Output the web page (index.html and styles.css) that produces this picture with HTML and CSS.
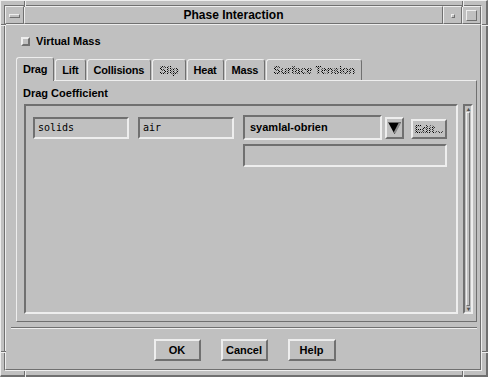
FILE: index.html
```html
<!DOCTYPE html>
<html lang="en">

<head>
    <meta charset="utf-8">
    <title>Phase Interaction</title>
    <link rel="stylesheet" href="styles.css">
</head>

<body>

    <div class="window">
        <div class="frame">
            <div class="titlebar">
                <div class="wm-btn"><span class="menu-bar"></span></div>
                <div class="title">Phase Interaction</div>
                <div class="wm-btn"><span class="min-box"></span></div>
                <div class="wm-btn"><span class="max-box"></span></div>
            </div>

            <div class="client">
                <label class="check"><span class="checkbox"></span>Virtual Mass</label>

                <nav class="tabs">
                    <div class="tab active">Drag</div>
                    <div class="tab">Lift</div>
                    <div class="tab">Collisions</div>
                    <div class="tab"><span class="stipple">Slip</span></div>
                    <div class="tab">Heat</div>
                    <div class="tab">Mass</div>
                    <div class="tab"><span class="stipple">Surface Tension</span></div>
                </nav>

                <section class="panel">
                    <div class="group-label">Drag Coefficient</div>
                    <div class="panel-body">
                        <div class="table">
                            <div class="field mono">solids</div>
                            <div class="field mono">air</div>
                            <div class="method">
                                <div class="method-row">
                                    <div class="combo">syamlal-obrien</div>
                                    <button class="arrow-btn">
                                        <svg width="13" height="12" viewBox="0 0 13 12">
                                            <polygon points="0,0 13,0 6.5,12" fill="#000"/>
                                            <line x1="12" y1="0.5" x2="6.5" y2="11" stroke="#8c8c8c" stroke-width="2"/>
                                            <line x1="0" y1="0.5" x2="13" y2="0.5" stroke="#6a6a6a" stroke-width="1"/>
                                        </svg>
                                    </button>
                                    <button class="edit-btn"><span class="stipple">Edit...</span></button>
                                </div>
                                <div class="field wide"></div>
                            </div>
                        </div>
                        <div class="scrollbar">
                            <span class="sb-arrow">&#9652;</span>
                            <span class="thumb"></span>
                            <span class="sb-arrow">&#9662;</span>
                        </div>
                    </div>
                </section>

                <div class="separator"></div>

                <div class="buttons">
                    <button class="btn">OK</button>
                    <button class="btn">Cancel</button>
                    <button class="btn">Help</button>
                </div>
            </div>
        </div>

        <span class="tick v tl"></span>
        <span class="tick h tl"></span>
        <span class="tick v tr"></span>
        <span class="tick h tr"></span>
        <span class="tick h bl"></span>
        <span class="tick v bl"></span>
        <span class="tick v br"></span>
        <span class="tick h br"></span>
    </div>

</body>

</html>
```

FILE: styles.css
```css
body {
    margin: 0;
    padding: 0;
    background-color: #c0c0c0;
    font-family: "Liberation Sans", Arial, sans-serif;
    font-size: 11px;
    font-weight: bold;
    color: #000;
}

button {
    font-family: inherit;
    font-size: inherit;
    font-weight: inherit;
    color: inherit;
    background-color: #c0c0c0;
    padding: 0;
    margin: 0;
    box-sizing: border-box;
}

/* window manager frame */
.window {
    position: relative;
    width: 488px;
    height: 377px;
    box-sizing: border-box;
    border-style: solid;
    border-width: 1px 2px 2px 1px;
    border-color: #eeeeee #707070 #707070 #eeeeee;
    padding: 4px 4px 4px 3px;
}

.frame {
    height: 100%;
    box-sizing: border-box;
    border: 1px solid;
    border-color: #707070 #eeeeee #eeeeee #707070;
    display: flex;
    flex-direction: column;
}

.titlebar {
    display: flex;
    height: 18px;
}

.wm-btn,
.title {
    box-sizing: border-box;
    border: 1px solid;
    border-color: #eeeeee #707070 #707070 #eeeeee;
    display: flex;
    align-items: center;
    justify-content: center;
}

.wm-btn {
    width: 19px;
}

.title {
    flex: 1;
    font-size: 12px;
    line-height: 15px;
    padding-top: 1px;
}

.menu-bar {
    width: 11px;
    height: 4px;
    box-sizing: border-box;
    border: 1px solid;
    border-color: #eeeeee #707070 #707070 #eeeeee;
    margin-top: 1px;
}

.min-box {
    width: 4px;
    height: 4px;
    box-sizing: border-box;
    border: 1px solid;
    border-color: #eeeeee #707070 #707070 #eeeeee;
    margin-top: 1px;
}

.max-box {
    width: 11px;
    height: 11px;
    box-sizing: border-box;
    border: 1px solid;
    border-color: #eeeeee #707070 #707070 #eeeeee;
}

.tick {
    position: absolute;
    background-color: #eeeeee;
}

.tick.v {
    width: 1px;
    height: 6px;
    border-left: 1px solid #707070;
}

.tick.h {
    width: 5px;
    height: 1px;
    border-top: 1px solid #707070;
}

.tick.v.tl { left: 23px; top: 0; }
.tick.v.tr { left: 461px; top: 0; }
.tick.v.bl { left: 23px; top: 370px; height: 7px; }
.tick.v.br { left: 461px; top: 370px; height: 7px; }
.tick.h.tl { left: 0; top: 23px; width: 5px; }
.tick.h.bl { left: 0; top: 350px; width: 5px; }
.tick.h.tr { left: 481px; top: 23px; width: 7px; }
.tick.h.br { left: 481px; top: 350px; width: 7px; }

/* dialog */
.client {
    flex: 1;
    box-sizing: border-box;
    border: 1px solid;
    border-color: #eeeeee #707070 #707070 #eeeeee;
    display: flex;
    flex-direction: column;
}

.check {
    display: flex;
    align-items: center;
    gap: 6px;
    height: 9px;
    line-height: 9px;
    margin: 12px 0 0 15px;
}

.checkbox {
    width: 9px;
    height: 9px;
    box-sizing: border-box;
    border: 2px solid;
    border-color: #eeeeee #707070 #707070 #eeeeee;
}

.tabs {
    display: flex;
    align-items: flex-end;
    gap: 1px;
    height: 23px;
    margin: 11px 0 0 10px;
    position: relative;
    z-index: 1;
}

.tab {
    height: 21px;
    box-sizing: border-box;
    border: 1px solid;
    border-bottom: none;
    border-color: #eeeeee #707070 transparent #eeeeee;
    border-radius: 3px 3px 0 0;
    padding: 0 6px;
    line-height: 20px;
    letter-spacing: -0.2px;
    background-color: #c0c0c0;
}

.tab.active {
    height: 24px;
    margin-bottom: -1px;
    padding-top: 2px;
    line-height: 18px;
}

.stipple {
    color: transparent;
    background-image: repeating-conic-gradient(#000 0 25%, transparent 0 50%);
    background-size: 2px 2px;
    -webkit-background-clip: text;
    background-clip: text;
}

.panel {
    height: 242px;
    margin: 0 3px 0 10px;
    box-sizing: border-box;
    border: 1px solid;
    border-color: #eeeeee #707070 #707070 #eeeeee;
    padding: 0 3px 7px 7px;
    display: flex;
    flex-direction: column;
}

.group-label {
    height: 23px;
    box-sizing: border-box;
    padding-top: 6px;
    line-height: 13px;
    margin-left: -1px;
}

.panel-body {
    flex: 1;
    display: flex;
    gap: 5px;
}

.table {
    flex: 1;
    box-sizing: border-box;
    border: 2px solid;
    border-color: #707070 #eeeeee #eeeeee #707070;
    padding: 9px 0 0 7px;
    display: flex;
    align-items: flex-start;
    gap: 9px;
}

.field {
    width: 96px;
    height: 22px;
    box-sizing: border-box;
    border: 2px solid;
    border-color: #707070 #eeeeee #eeeeee #707070;
    padding-left: 3px;
    line-height: 18px;
    margin-top: 2px;
}

.mono {
    font-family: "DejaVu Sans Mono", "Liberation Mono", monospace;
    font-weight: normal;
    font-size: 10px;
}

.field.wide {
    width: 204px;
    height: 23px;
    margin-top: 0;
}

.method {
    display: flex;
    flex-direction: column;
    gap: 4px;
}

.method-row {
    display: flex;
    align-items: center;
    height: 25px;
}

.combo {
    width: 139px;
    height: 25px;
    box-sizing: border-box;
    border: 2px solid;
    border-color: #707070 #eeeeee #eeeeee #707070;
    padding-left: 5px;
    line-height: 21px;
}

.arrow-btn {
    width: 19px;
    height: 22px;
    margin-left: 3px;
    border: 2px solid;
    border-color: #eeeeee #707070 #707070 #eeeeee;
    display: flex;
    align-items: center;
    justify-content: center;
}

.edit-btn {
    width: 36px;
    height: 20px;
    margin: 3px 0 0 7px;
    border: 2px solid;
    border-color: #eeeeee #707070 #707070 #eeeeee;
    line-height: 16px;
    letter-spacing: -0.2px;
}

.scrollbar {
    width: 10px;
    box-sizing: border-box;
    border: 2px solid;
    border-color: #707070 #eeeeee #eeeeee #707070;
    display: flex;
    flex-direction: column;
    align-items: center;
}

.sb-arrow {
    font-size: 6px;
    line-height: 6px;
    height: 6px;
    color: #505050;
}

.thumb {
    flex: 1;
    width: 4px;
    box-sizing: border-box;
    border: 1px solid;
    border-color: #eeeeee #707070 #707070 #eeeeee;
}

.separator {
    height: 1px;
    border-top: 1px solid #707070;
    background-color: #eeeeee;
    margin: 5px 3px 0 5px;
}

.buttons {
    display: flex;
    justify-content: center;
    gap: 20px;
    margin-top: 10px;
    padding-left: 3px;
}

.btn {
    width: 47px;
    height: 22px;
    border: 2px solid;
    border-color: #eeeeee #707070 #707070 #eeeeee;
    line-height: 18px;
}

.btn:last-child {
    width: 48px;
}
```
